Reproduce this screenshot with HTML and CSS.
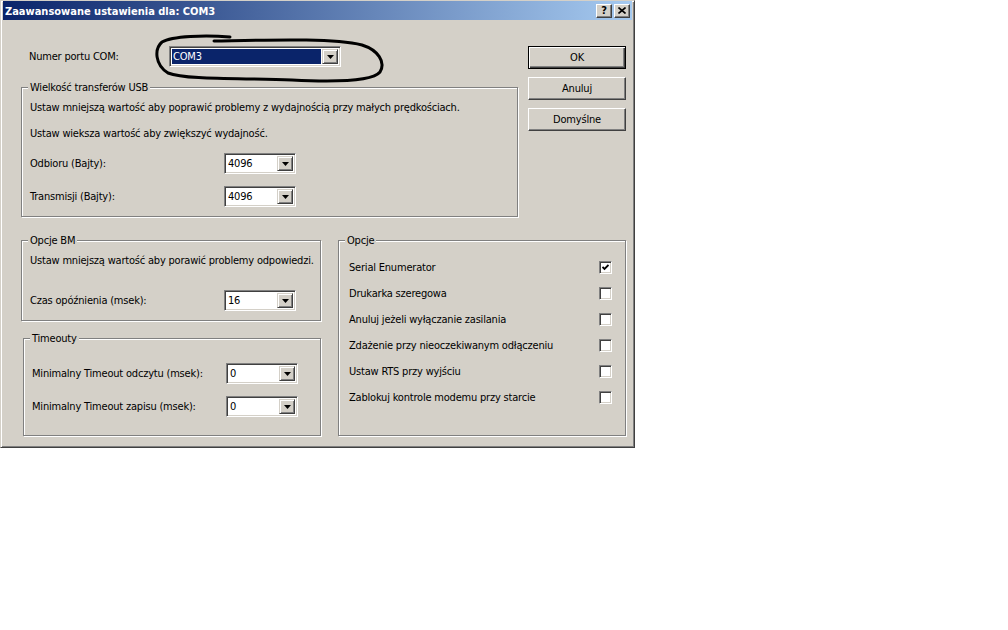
FILE: index.html
```html
<!DOCTYPE html>
<html lang="pl">
<head>
  <meta charset="UTF-8" />
  <title>Zaawansowane ustawienia dla: COM3</title>
  <link rel="stylesheet" href="styles.css">
</head>
<body>

<div class="window">
  <!-- Title bar -->
  <div class="titlebar">
    <span class="title">Zaawansowane ustawienia dla: COM3</span>
    <div class="title-buttons">
      <span class="tbtn help">?</span>
      <span class="tbtn close">
        <svg width="8" height="7" viewBox="0 0 8 7"><path d="M0.5 0.5 L7.5 6.5 M7.5 0.5 L0.5 6.5" stroke="#000" stroke-width="1.6"/></svg>
      </span>
    </div>
  </div>

  <div class="content">
    <div class="top-row">
      <div class="main">
        <div class="port-row">
          <span>Numer portu COM:</span>
          <div class="combo wide">
            <span class="combo-value selected">COM3</span>
            <span class="drop"><svg width="7" height="4" viewBox="0 0 7 4"><polygon points="0,0 7,0 3.5,4" fill="#000"/></svg></span>
          </div>
        </div>

        <div class="group usb">
          <span class="legend">Wielkość transferów USB</span>
          <p>Ustaw mniejszą wartość aby poprawić problemy z wydajnością przy małych prędkościach.</p>
          <p class="gap">Ustaw wieksza wartość aby zwiększyć wydajność.</p>
          <div class="field gap">
            <span>Odbioru (Bajty):</span>
            <div class="combo">
              <span class="combo-value">4096</span>
              <span class="drop"><svg width="7" height="4" viewBox="0 0 7 4"><polygon points="0,0 7,0 3.5,4" fill="#000"/></svg></span>
            </div>
          </div>
          <div class="field next">
            <span>Transmisji (Bajty):</span>
            <div class="combo">
              <span class="combo-value">4096</span>
              <span class="drop"><svg width="7" height="4" viewBox="0 0 7 4"><polygon points="0,0 7,0 3.5,4" fill="#000"/></svg></span>
            </div>
          </div>
        </div>
      </div>

      <div class="buttons">
        <button class="btn default">OK</button>
        <button class="btn">Anuluj</button>
        <button class="btn">Domyślne</button>
      </div>
    </div>

    <div class="bottom-row">
      <div class="left-col">
        <div class="group bm">
          <span class="legend">Opcje BM</span>
          <p>Ustaw mniejszą wartość aby porawić problemy odpowiedzi.</p>
          <div class="field bm-field">
            <span>Czas opóźnienia (msek):</span>
            <div class="combo">
              <span class="combo-value">16</span>
              <span class="drop"><svg width="7" height="4" viewBox="0 0 7 4"><polygon points="0,0 7,0 3.5,4" fill="#000"/></svg></span>
            </div>
          </div>
        </div>

        <div class="group timeouts">
          <span class="legend">Timeouty</span>
          <div class="field">
            <span>Minimalny Timeout odczytu (msek):</span>
            <div class="combo">
              <span class="combo-value">0</span>
              <span class="drop"><svg width="7" height="4" viewBox="0 0 7 4"><polygon points="0,0 7,0 3.5,4" fill="#000"/></svg></span>
            </div>
          </div>
          <div class="field next">
            <span>Minimalny Timeout zapisu (msek):</span>
            <div class="combo">
              <span class="combo-value">0</span>
              <span class="drop"><svg width="7" height="4" viewBox="0 0 7 4"><polygon points="0,0 7,0 3.5,4" fill="#000"/></svg></span>
            </div>
          </div>
        </div>
      </div>

      <div class="group options">
        <span class="legend">Opcje</span>
        <div class="option">
          <span>Serial Enumerator</span>
          <span class="check"><svg width="7" height="7" viewBox="0 0 7 7"><polyline points="0.5,3 2.5,5 6.5,1" fill="none" stroke="#000" stroke-width="1.8"/></svg></span>
        </div>
        <div class="option">
          <span>Drukarka szeregowa</span>
          <span class="check"></span>
        </div>
        <div class="option">
          <span>Anuluj jeżeli wyłączanie zasilania</span>
          <span class="check"></span>
        </div>
        <div class="option">
          <span>Zdażenie przy nieoczekiwanym odłączeniu</span>
          <span class="check"></span>
        </div>
        <div class="option">
          <span>Ustaw RTS przy wyjściu</span>
          <span class="check"></span>
        </div>
        <div class="option">
          <span>Zablokuj kontrole modemu przy starcie</span>
          <span class="check"></span>
        </div>
      </div>
    </div>
  </div>

  <!-- hand-drawn marker loop around the COM port combo -->
  <svg class="scribble" width="636" height="448" viewBox="0 0 636 448">
    <path d="M230 37 C205 35 172 36 162 42 C154 49 155 65 168 73 C186 80 240 78 292 80 C332 82 372 82 380 72 C386 62 378 50 362 45 C332 38 272 40 214 41"
          fill="none" stroke="#000" stroke-width="3" stroke-linecap="round" stroke-linejoin="round"/>
  </svg>
</div>

</body>
</html>
```

FILE: styles.css
```css
:root {
  --face: #d4d0c8;
  --shadow: #808080;
  --dark: #404040;
  --light: #fff;
  --navy: #0a246a;
  --font: "DejaVu Sans Condensed", "DejaVu Sans", sans-serif;
}

* {
  box-sizing: border-box;
  margin: 0;
  padding: 0;
}

body {
  background: #fff;
  font-family: var(--font);
  font-stretch: condensed;
  font-size: 11px;
  letter-spacing: -0.2px;
  color: #000;
}

.window {
  position: relative;
  width: 635px;
  height: 448px;
  background: var(--face);
  border: 1px solid;
  border-color: var(--face) var(--dark) var(--dark) var(--face);
  box-shadow: inset 1px 1px var(--light), inset -1px -1px var(--shadow);
  padding: 0 2px 0 2px;
  white-space: nowrap;
}

/* Title bar */
.titlebar {
  height: 19px;
  display: flex;
  align-items: center;
  padding: 0 2px 0 2px;
  background: linear-gradient(to right, var(--navy), #a6caf0);
}

.title {
  color: #fff;
  font-weight: bold;
  letter-spacing: 0;
  line-height: 19px;
  padding-top: 1px;
}

.title-buttons {
  margin-left: auto;
  display: flex;
  gap: 2px;
}

.tbtn {
  width: 16px;
  height: 14px;
  display: flex;
  align-items: center;
  justify-content: center;
  background: var(--face);
  border: 1px solid;
  border-color: var(--light) var(--dark) var(--dark) var(--light);
  box-shadow: inset -1px -1px var(--shadow);
  font-weight: bold;
  font-size: 11px;
  line-height: 12px;
}

/* Content */
.content {
  padding: 26px 0 0 18px;
}

.top-row {
  display: flex;
}

.main {
  width: 497px;
}

.port-row {
  display: grid;
  grid-template-columns: 140px 172px;
  align-items: center;
  height: 21px;
  padding-left: 8px;
}

.buttons {
  margin-left: 10px;
  width: 98px;
  display: flex;
  flex-direction: column;
  gap: 8px;
}

.btn {
  height: 23px;
  font-family: var(--font);
  font-stretch: condensed;
  font-size: 11px;
  letter-spacing: -0.2px;
  color: #000;
  background: var(--face);
  border: 1px solid;
  border-color: var(--light) var(--dark) var(--dark) var(--light);
  box-shadow: inset -1px -1px var(--shadow);
}

.btn.default {
  border-color: #000;
  box-shadow: inset 1px 1px var(--light), inset -1px -1px var(--dark), inset -2px -2px var(--shadow);
}

/* Group boxes */
.group {
  position: relative;
  border: 1px solid var(--shadow);
  box-shadow: inset 1px 1px var(--light), 1px 1px var(--light);
}

.legend {
  position: absolute;
  top: -7px;
  left: 6px;
  padding: 0 2px;
  line-height: 13px;
  background: var(--face);
}

.group p {
  line-height: 13px;
}

.usb {
  margin-top: 20px;
  height: 130px;
  padding: 13px 0 0 8px;
}

.gap {
  margin-top: 13px;
}

.next {
  margin-top: 12px;
}

.field {
  display: grid;
  grid-template-columns: 194px 72px;
  align-items: center;
  height: 21px;
}

.bottom-row {
  display: flex;
  margin-top: 23px;
}

.left-col {
  width: 300px;
}

.bm {
  height: 81px;
  padding: 13px 0 0 8px;
}

.bm-field {
  margin-top: 23px;
}

.timeouts {
  margin: 17px 0 0 2px;
  height: 98px;
  padding: 24px 0 0 8px;
}

.options {
  margin-left: 17px;
  width: 288px;
  height: 196px;
  padding: 13px 13px 0 10px;
}

.option {
  height: 26px;
  display: flex;
  align-items: center;
  justify-content: space-between;
}

.check {
  width: 13px;
  height: 13px;
  display: flex;
  align-items: center;
  justify-content: center;
  background: #fff;
  border: 1px solid;
  border-color: var(--shadow) var(--light) var(--light) var(--shadow);
  box-shadow: inset 1px 1px var(--dark), inset -1px -1px var(--face);
}

/* Combo boxes */
.combo {
  height: 21px;
  display: flex;
  align-items: stretch;
  padding: 2px;
  background: #fff;
  border: 1px solid;
  border-color: var(--shadow) var(--light) var(--light) var(--shadow);
  box-shadow: inset 1px 1px var(--dark), inset -1px -1px var(--face);
}

.combo-value {
  flex: 1;
  line-height: 15px;
  padding-left: 1px;
}

.combo-value.selected {
  background: var(--navy);
  color: #fff;
  margin: 0 1px 0 0;
}

.drop {
  width: 16px;
  display: flex;
  align-items: center;
  justify-content: center;
  background: var(--face);
  border: 1px solid;
  border-color: var(--face) var(--dark) var(--dark) var(--face);
  box-shadow: inset 1px 1px var(--light), inset -1px -1px var(--shadow);
}

.scribble {
  position: absolute;
  top: -1px;
  left: -1px;
  pointer-events: none;
}
```
